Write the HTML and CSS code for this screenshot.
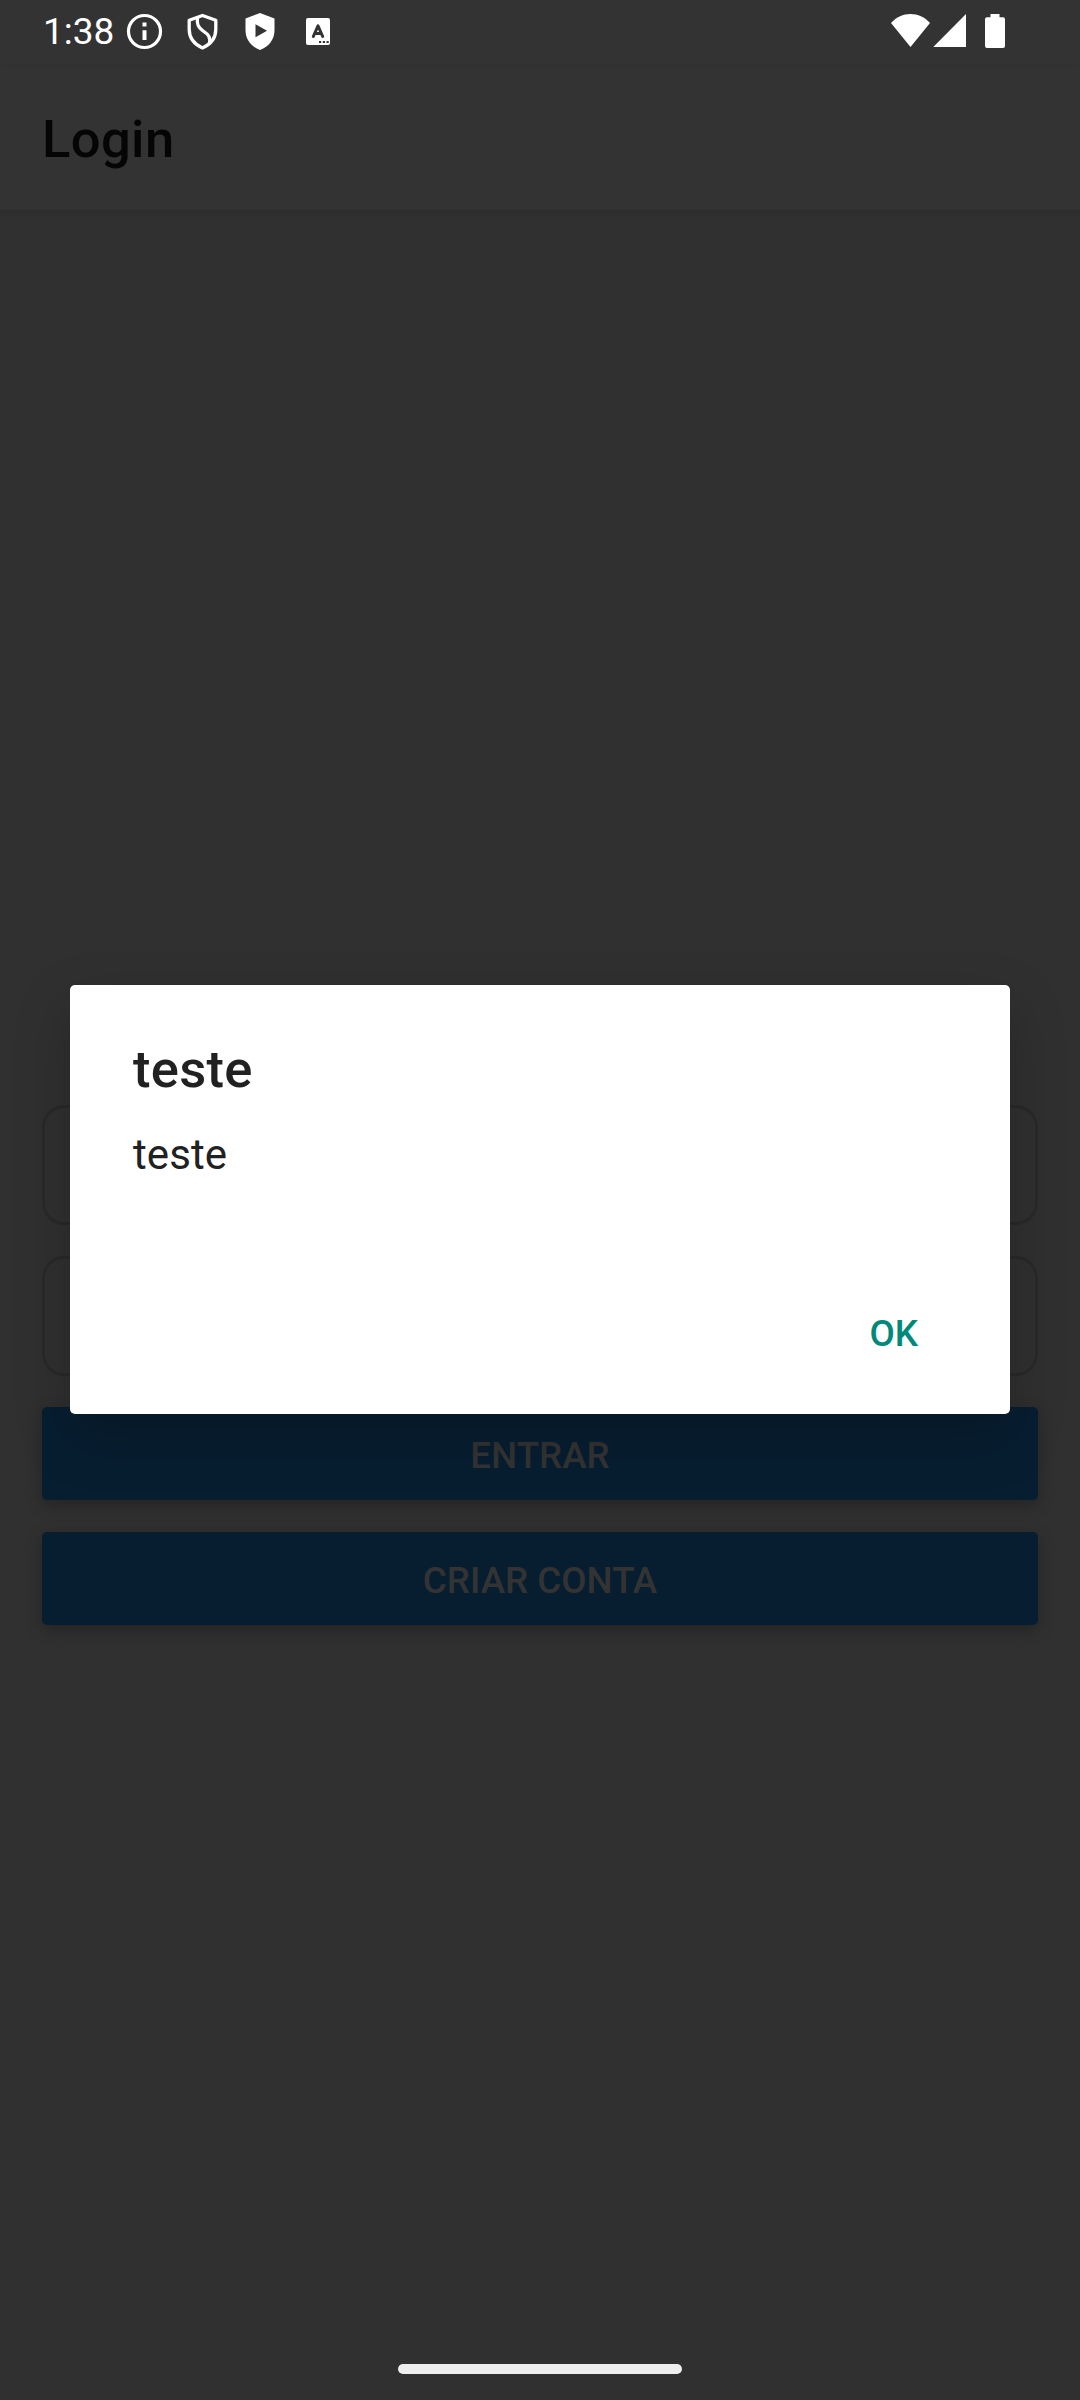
FILE: index.html
```html
<!DOCTYPE html>
<html lang="pt-BR">
<head>
<meta charset="utf-8">
<title>Login</title>
<link rel="stylesheet" href="styles.css">
</head>
<body>
<div class="screen">
  <div class="status">
    <span class="time">1:38</span>
    <svg class="notifications" width="220" height="68" viewBox="120 0 220 68" fill="none" stroke="#fff">
      <circle cx="144.500" cy="31.500" r="16" stroke-width="3.200"/>
      <path d="M144.500 30.300v9.800M144.500 22.600v3.800" stroke-width="4"/>
      <path d="M202.500 15.500l13.300 4.700v9c0 9-5 15-13.300 18.700-8.300-3.700-13.300-9.700-13.300-18.700v-9z" stroke-width="3.300" stroke-linejoin="round"/>
      <path d="M197.500 17.500c-.8 7 .8 9.500 5 13 5 3.500 8.500 5.500 6.800 13" stroke-width="3.300"/>
      <path d="M260 13l14.500 5.400v11.800c0 9-5.500 16.500-14.500 19.800-9-3.300-14.500-10.800-14.500-19.800v-11.800z" fill="#fff" stroke="none"/>
      <path d="M255.500 24.300v13l11.500-6.500z" fill="#333" stroke="none"/>
      <rect x="306" y="18" width="24" height="27" rx="2" fill="#fff" stroke="none"/>
      <path d="M313.300 36.500l4.700-10.700 4.700 10.700M315 33.500h6" stroke="#333" stroke-width="3" stroke-linecap="round" stroke-linejoin="round"/>
      <path d="M319 42h2.200M322.800 42h2.200M326.500 42h2.200" stroke="#333" stroke-width="2"/>
    </svg>
    <svg class="system" width="120" height="68" viewBox="888 0 120 68" fill="#fff">
      <path d="M891 23c10.500-12 28.500-12 39 0l-19.500 24z"/>
      <path d="M933.300 47L966 14v33z"/>
      <path d="M990.500 14h9v3.300h3.500a2 2 0 0 1 2 2v26.700a2 2 0 0 1-2 2h-16a2 2 0 0 1-2-2v-26.700a2 2 0 0 1 2-2h3.500z"/>
    </svg>
  </div>
  <header class="header"><h1 class="heading">Login</h1></header>
  <main class="form">
    <div class="field"></div>
    <div class="field"></div>
    <button class="button">ENTRAR</button>
    <button class="button">CRIAR CONTA</button>
  </main>
  <div class="home"></div>
  <section class="dialog" role="dialog">
    <h2 class="title">teste</h2>
    <p class="message">teste</p>
    <button class="ok">OK</button>
  </section>
</div>
</body>
</html>
```
FILE: styles.css
```css
* {
  box-sizing: border-box;
}

body {
  margin: 0;
  font-family: Roboto, sans-serif;
}

.screen {
  position: relative;
  display: flex;
  flex-direction: column;
  width: 1080px;
  height: 2400px;
  overflow: hidden;
  background: #303030;
}

.status {
  display: flex;
  height: 68px;
  padding: 0 72px 0 43px;
  background: #333;
  color: #fff;
}

.time {
  width: 77px;
  font-size: 37px;
  line-height: 63px;
  white-space: nowrap;
}

.system {
  margin-left: auto;
}

.header {
  display: flex;
  height: 142px;
  padding: 40px 42px 0;
  background: #333;
  box-shadow: 0 1px 5px rgba(0, 0, 0, 0.12);
}

.heading {
  margin: 0;
  color: #050505;
  font-size: 52.5px;
  font-weight: 500;
  letter-spacing: 0.4px;
  line-height: 62px;
}

.form {
  display: flex;
  flex: 1;
  flex-direction: column;
  padding: 895px 42px 0;
}

.field {
  height: 120px;
  margin-bottom: 31px;
  border: 3px solid #292929;
  border-radius: 22px;
}

.button {
  height: 93px;
  margin: 0 0 32px;
  padding: 4px 0 0;
  border: 0;
  border-radius: 5px;
  background: #071e31;
  box-shadow: 0 5px 16px rgba(0, 0, 0, 0.27);
  color: #333;
  font: 500 36.75px Roboto, sans-serif;
}

.home {
  align-self: center;
  width: 284px;
  height: 10px;
  margin-bottom: 26px;
  border-radius: 5px;
  background: #eee;
}

.dialog {
  position: absolute;
  top: 985px;
  left: 70px;
  display: flex;
  flex-direction: column;
  width: 940px;
  height: 429px;
  padding: 53px 63px 0;
  border-radius: 5px;
  background: #fff;
  box-shadow: 0 22px 56px rgba(0, 0, 0, 0.22);
  color: #212121;
}

.title {
  margin: 0;
  font-size: 52.5px;
  font-weight: 500;
  letter-spacing: 0.3px;
  line-height: 62px;
}

.message {
  margin: 30px 0 129px;
  font-size: 42px;
  letter-spacing: 0.1px;
  line-height: 50px;
}

.ok {
  align-self: flex-end;
  margin-right: 29px;
  padding: 0;
  border: 0;
  background: none;
  color: #00897b;
  font: 500 36.75px/50px Roboto, sans-serif;
}
```
